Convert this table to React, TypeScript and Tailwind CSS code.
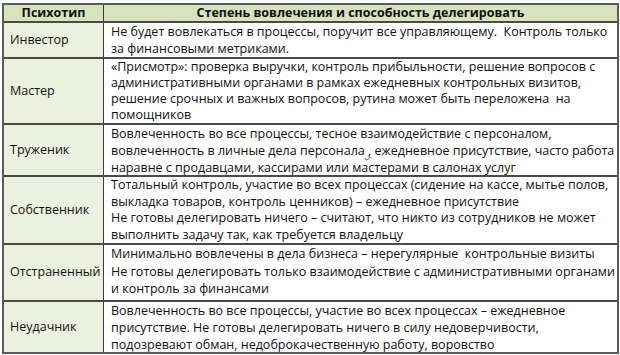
const rows: { name: string; h: string; lh: string; lines: React.ReactNode[] }[] = [
  {
    name: "Инвестор",
    h: "h-[36px]",
    lh: "leading-[17px]",
    lines: [
      "Не будет вовлекаться в процессы, поручит все управляющему.  Контроль только",
      "за финансовыми метриками.",
    ],
  },
  {
    name: "Мастер",
    h: "h-[66px]",
    lh: "leading-[16px]",
    lines: [
      "«Присмотр»: проверка выручки, контроль прибыльности, решение вопросов с",
      "административными органами в рамках ежедневных контрольных визитов,",
      "решение срочных и важных вопросов, рутина может быть переложена  на",
      "помощников",
    ],
  },
  {
    name: "Труженик",
    h: "h-[52px]",
    lh: "leading-[17px]",
    lines: [
      "Вовлеченность во все процессы, тесное взаимодействие с персоналом,",
      <>
        вовлеченность в личные дела персонала
        <span className="underline decoration-wavy decoration-[#6aa84f]"> ,</span> ежедневное присутствие, часто работа
      </>,
      "наравне с продавцами, кассирами или мастерами в салонах услуг",
    ],
  },
  {
    name: "Собственник",
    h: "h-[68px]",
    lh: "leading-[16.5px]",
    lines: [
      "Тотальный контроль, участие во всех процессах (сидение на кассе, мытье полов,",
      "выкладка товаров, контроль ценников) – ежедневное присутствие",
      "Не готовы делегировать ничего – считают, что никто из сотрудников не может",
      "выполнить задачу так, как требуется владельцу",
    ],
  },
  {
    name: "Отстраненный",
    h: "h-[57px]",
    lh: "leading-[17.5px]",
    lines: [
      "Минимально вовлечены в дела бизнеса – нерегулярные  контрольные визиты",
      "Не готовы делегировать только взаимодействие с административными органами",
      "и контроль за финансами",
    ],
  },
  {
    name: "Неудачник",
    h: "h-[52px]",
    lh: "leading-[17px]",
    lines: [
      "Вовлеченность во все процессы, участие во всех процессах – ежедневное",
      "присутствие. Не готовы делегировать ничего в силу недоверчивости,",
      "подозревают обман, недоброкачественную работу, воровство",
    ],
  },
];

export default function App() {
  return (
    <div className="w-[620px] h-[355px] bg-white pt-[3px] pl-[2px] font-['Open_Sans',sans-serif] text-[12.5px] text-[#111]">
      <div className="w-[617px] border-2 border-[#5c5c5c]">
        {/* header */}
        <div className="flex h-[16px] bg-[#d6e3bc] font-bold leading-[16px]">
          <div className="w-[100px] text-center border-r border-[#3c3c3c]">Психотип</div>
          <div className="flex-1 text-center">Степень вовлечения и способность делегировать</div>
        </div>
        {rows.map((r) => (
          <div key={r.name} className={`flex border-t-2 border-[#4a4a4a] ${r.h}`}>
            <div className="w-[100px] shrink-0 bg-[#ebf1de] border-r border-[#3c3c3c] flex items-center pl-[6px]">
              {r.name}
            </div>
            <div className={`flex-1 pl-[7px] ${r.lh}`}>
              {r.lines.map((l, i) => (
                <div key={i} className="whitespace-pre">
                  {l}
                </div>
              ))}
            </div>
          </div>
        ))}
      </div>
    </div>
  );
}
